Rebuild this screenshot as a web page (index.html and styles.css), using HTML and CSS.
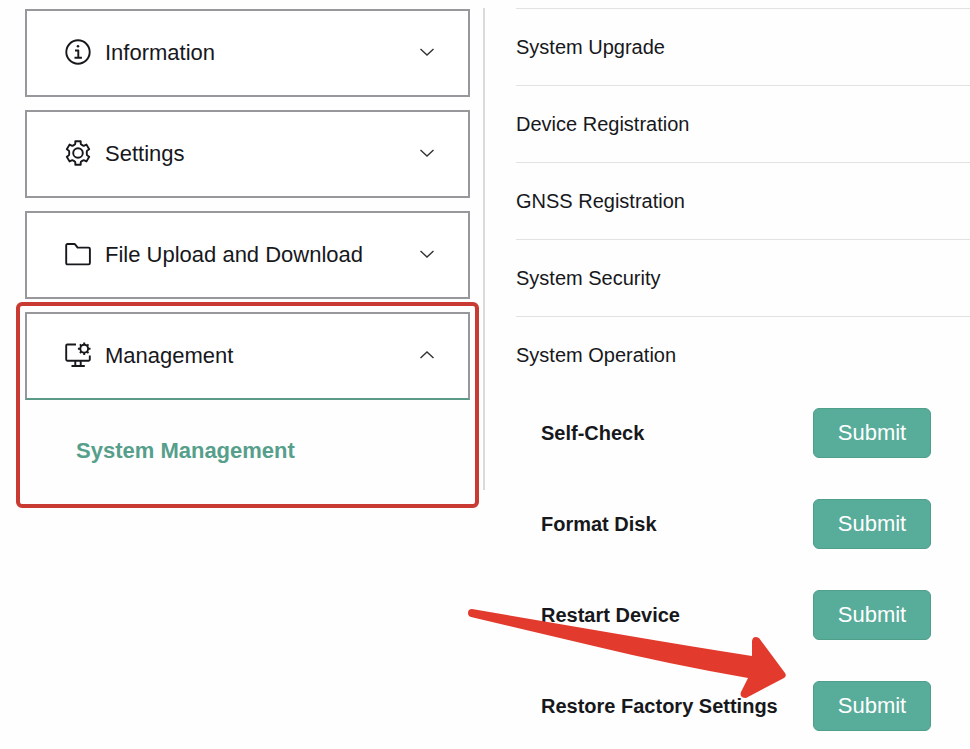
FILE: index.html
```html
<!doctype html>
<html lang="en">
<head>
	<meta charset="utf-8">
	<meta name="viewport" content="width=device-width, initial-scale=1">
	<title>System Management</title>
	<link rel="stylesheet" href="styles.css">
</head>
<body>
	<div class="page">
		<nav class="sidebar">
			<button class="menu-btn" type="button" aria-expanded="false">
				<svg class="icon" viewBox="0 0 26 26">
					<circle cx="13" cy="13" r="11.7"/>
					<path d="M10 11.500h3.300v7.300M9.500 18.800h7.400"/>
					<circle class="dot" cx="13" cy="7.300" r="1.300"/>
				</svg>
				<span class="menu-name">Information</span>
				<svg class="chevron" viewBox="0 0 16 10"><path d="M1.500 2L8 8l6.500-6"/></svg>
			</button>
			<button class="menu-btn" type="button" aria-expanded="false">
				<svg class="icon" viewBox="0 0 26 26">
					<path d="M10.300 1.300h5.400v2.300q0 .7.700 1l1.700 1q.6.400 1.200.1l2.200-1.100 2.700 4.700-1.800 1.200q-.6.400-.6 1.200v2.600q0 .8.600 1.200l1.800 1.200-2.700 4.700-2.200-1.100q-.6-.3-1.200.1l-1.700 1q-.7.300-.7 1v2.300h-5.400v-2.300q0-.7-.7-1l-1.700-1q-.6-.4-1.200-.1l-2.200 1.100-2.700-4.700 1.800-1.200q.6-.4.6-1.200v-2.600q0-.8-.6-1.200L1.800 9.300l2.700-4.700 2.200 1.100q.6.300 1.200-.1l1.700-1q.7-.3.700-1z"/>
					<circle cx="13" cy="13" r="4.800"/>
				</svg>
				<span class="menu-name">Settings</span>
				<svg class="chevron" viewBox="0 0 16 10"><path d="M1.500 2L8 8l6.500-6"/></svg>
			</button>
			<button class="menu-btn" type="button" aria-expanded="false">
				<svg class="icon" viewBox="0 0 26 26">
					<path d="M2.500 3h6.700c.5 0 .8.200 1.100.6l2.300 3h11c.8 0 1.300.5 1.300 1.300v14.200c0 .8-.5 1.300-1.300 1.300H2.500c-.8 0-1.300-.5-1.300-1.300V4.300C1.200 3.500 1.700 3 2.500 3z"/>
				</svg>
				<span class="menu-name">File Upload and Download</span>
				<svg class="chevron" viewBox="0 0 16 10"><path d="M1.500 2L8 8l6.500-6"/></svg>
			</button>
			<div class="menu-group">
				<button class="menu-btn active" type="button" aria-expanded="true">
					<svg class="icon" viewBox="0 0 26 26">
						<path d="M11 2.500H2.300c-.7 0-1.100.4-1.100 1.100v14c0 .7.400 1.100 1.100 1.100h21.400c.7 0 1.100-.4 1.100-1.100v-4M10.300 18.700v5M15.700 18.700v5M6.500 24h13.300"/>
						<circle cx="19.200" cy="6.700" r="3.900"/>
						<path d="M19.200 2.800V.4M19.200 10.600V13M15.300 6.700h-2.400M23.100 6.700h2.400M16.400 3.900l-1.500-1.500M22 9.500l1.500 1.500M16.400 9.500l-1.500 1.500M22 3.900l1.500-1.500"/>
					</svg>
					<span class="menu-name">Management</span>
					<svg class="chevron" viewBox="0 0 16 10"><path d="M1.500 8L8 2l6.500 6"/></svg>
				</button>
				<a class="sub-item" href="#operation">System Management</a>
			</div>
		</nav>

		<main class="content">
			<button class="row" type="button">System Upgrade</button>
			<button class="row" type="button">Device Registration</button>
			<button class="row" type="button">GNSS Registration</button>
			<button class="row" type="button">System Security</button>
			<button class="row" type="button" aria-expanded="true">System Operation</button>
			<form class="operations" id="operation">
				<label for="check">Self-Check</label>
				<button class="submit" id="check" type="button">Submit</button>
				<label for="format">Format Disk</label>
				<button class="submit" id="format" type="button">Submit</button>
				<label for="restart">Restart Device</label>
				<button class="submit" id="restart" type="button">Submit</button>
				<label for="restore">Restore Factory Settings</label>
				<button class="submit" id="restore" type="button">Submit</button>
				<!-- arrow pointing to the factory reset button -->
				<svg class="arrow" viewBox="0 0 320 64" aria-hidden="true">
					<path d="M4 -28L150 -3Q220 9 284 19V4Q285 -2 291 1L317 36Q319 39 316 41L278 61Q271 61 273 55L280 41Q200 27 130 10L3 -20Q0 -21 0 -24Q0 -28 4 -28z"/>
				</svg>
			</form>
		</main>
	</div>
</body>
</html>
```
FILE: styles.css
```css
*{
	box-sizing: border-box;
}
body{
	margin: 0;
	background: #fefefe;
	color: #17181c;
	font-family: "Liberation Sans", Arial, sans-serif;
}
button{
	font-family: inherit;
	color: inherit;
	cursor: pointer;
}
.page{
	display: flex;
	align-items: flex-start;
	padding-top: 8px;
}

/* left menu */
.sidebar{
	display: flex;
	flex-direction: column;
	gap: 13px;
	flex: 0 0 50%;
	padding: 1px 13px 0 25px;
	border-right: 2px solid #dadada;
}
.menu-btn{
	display: flex;
	align-items: center;
	width: 100%;
	padding: 28px 33px 30px 38px;
	border: 2px solid #98989c;
	background: #fff;
	font-size: 22px;
	line-height: 25px;
	text-align: left;
}
.menu-btn.active{
	border-bottom-color: #5a9a86;
}
.menu-name{
	flex: 1;
	padding-left: 14px;
}
.icon{
	width: 26px;
	height: 26px;
	fill: none;
	stroke: #17181c;
	stroke-width: 1.9;
	stroke-linejoin: round;
	overflow: visible;
}
.icon .dot{
	fill: #17181c;
	stroke: none;
}
.chevron{
	width: 16px;
	height: 10px;
	fill: none;
	stroke: #333;
	stroke-width: 1.4;
}
.menu-group{
	position: relative;
}
/* red frame around the open group */
.menu-group::after{
	content: "";
	position: absolute;
	inset: -10px -9px -18px;
	border: 4px solid #c83a32;
	border-radius: 6px;
	pointer-events: none;
}
.sub-item{
	display: block;
	padding: 38px 51px 27px;
	color: #569f8b;
	font-size: 22px;
	font-weight: bold;
	line-height: 25px;
	text-decoration: none;
}

/* right part */
.content{
	flex: 1;
	padding-left: 31px;
}
.row{
	display: block;
	width: 100%;
	padding: 26px 0;
	border: 0;
	border-top: 1px solid #e2e2e2;
	background: none;
	font-size: 20px;
	line-height: 24px;
	text-align: left;
}
.operations{
	position: relative;
	display: grid;
	grid-template-columns: 272px 118px;
	gap: 41px 0;
	align-items: center;
	padding: 15px 0 14px 25px;
	font-size: 20px;
	font-weight: bold;
}
.submit{
	padding: 12px 0;
	border: 1px solid #4f9f8b;
	border-radius: 6px;
	background: #58ac9a;
	color: #fff;
	font-size: 22px;
	line-height: 24px;
}
.arrow{
	position: absolute;
	left: -48px;
	bottom: 44px;
	width: 320px;
	height: 64px;
	fill: #e33a2e;
	overflow: visible;
	pointer-events: none;
}
```
